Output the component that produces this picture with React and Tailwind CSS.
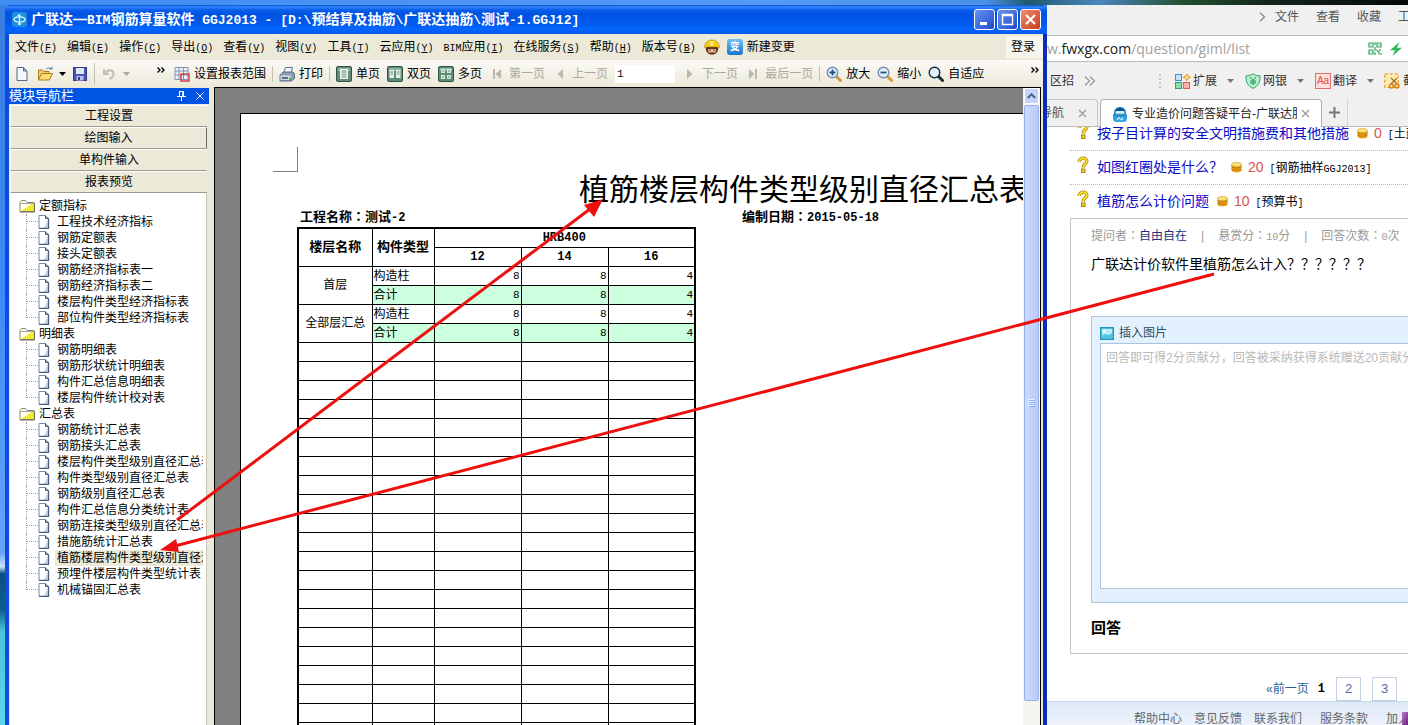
import React from "react";

const CJK = "font-['Liberation_Sans','Noto_Sans_CJK_SC',sans-serif]";

/* Sets the Latin runs of a mixed string in a monospaced face and centres full-width colons. */
function Mixed({ text, latin = "text-[10px]" }) {
  return text.split(/([\x20-\x7e]+|：)/).filter(Boolean).map((part, i) =>
    /^[\x20-\x7e]/.test(part) ? (
      <span key={i} className={`whitespace-pre font-['Liberation_Mono',monospace] ${latin}`}>{part}</span>
    ) : (
      <span key={i} className={part === "：" ? "font-['Noto_Sans_CJK_TC',sans-serif] leading-none" : ""} lang={part === "：" ? "zh-TW" : undefined}>{part}</span>
    )
  );
}

/* ---------- icons ---------- */

const Svg = ({ w = 16, h = 16, children, className = "" }) => (
  <svg width={w} height={h} viewBox={`0 0 ${w} ${h}`} className={`shrink-0 ${className}`} aria-hidden="true">
    {children}
  </svg>
);

const AppLogo = () => (
  <Svg w={15} h={15}>
    <rect width="15" height="15" rx="3" fill="#1c8fe0" />
    <ellipse cx="7.5" cy="7.5" rx="5.5" ry="2.6" fill="none" stroke="#d8f4ff" strokeWidth="1.3" />
    <path d="M7.5 2v11M5.5 3.5h3M6 12h3" stroke="#d8f4ff" strokeWidth="1.3" fill="none" />
  </Svg>
);

const NewFile = () => (
  <Svg>
    <path d="M3 1.5h6.5l3.500 3.500v9.500h-10z" fill="#f4f7fd" stroke="#56698f" />
    <path d="M9.500 1.500v3.500h3.500z" fill="#b4c4e4" stroke="#56698f" />
  </Svg>
);

const OpenFile = () => (
  <Svg>
    <path d="M1.500 14V4h4l1.500 1.500h5V8" fill="#f5cf68" stroke="#a97a1c" />
    <path d="M1.500 14l3-6.500h11l-3.200 6.500z" fill="#fbdc7b" stroke="#a97a1c" />
    <path d="M9 3.500c1.500-2 4-2 5 0" fill="none" stroke="#48729e" />
    <path d="M12.200 3.200h3.200v-2.700z" fill="#48729e" />
  </Svg>
);

const Save = () => (
  <Svg>
    <rect x="1.500" y="1.500" width="13" height="13" fill="#4a55b8" stroke="#30397f" />
    <rect x="4" y="2" width="8" height="6" fill="#dfe6f7" />
    <rect x="4.500" y="10" width="7" height="4.500" fill="#b9c3e6" />
    <rect x="6" y="11" width="2" height="3" fill="#30397f" />
  </Svg>
);

const Undo = () => (
  <Svg>
    <path d="M3 3v5h5" fill="none" stroke="#c4c3ba" strokeWidth="2" />
    <path d="M3.500 7.500C6 3.500 12 3 12.500 7.500c.3 3-2 4.500-4 5.500" fill="none" stroke="#c4c3ba" strokeWidth="2.200" />
  </Svg>
);

const Caret = ({ color = "#000" }) => (
  <Svg w={7} h={4}><path d="M0 0h7L3.500 4z" fill={color} /></Svg>
);

const RangeIcon = () => (
  <Svg>
    <path d="M1 1.500h13v12H1zM1 5h13M1 9h13M5 1v12.500M9.500 1v12.500" fill="#eef3fb" stroke="#7e93b4" />
    <rect x="7" y="8" width="8" height="7" fill="none" stroke="#d0434a" strokeWidth="1.500" />
  </Svg>
);

const Printer = () => (
  <Svg>
    <path d="M4.500 7l2-5.500h7L12 7z" fill="#eef4ff" stroke="#5b7396" />
    <path d="M1 9l3-3h10l1.500 2v4.500l-3 2.500H1z" fill="#8fa0b4" stroke="#445a74" strokeWidth=".8" />
    <path d="M1.500 9.500h10.500v4.500H1.500z" fill="#d2dce6" />
    <rect x="3" y="11" width="6" height="2" fill="#58708c" />
    <rect x="10" y="11.500" width="3" height="2.500" fill="#46c046" />
  </Svg>
);

const PageFrame = ({ children }) => (
  <Svg>
    <rect x=".5" y=".5" width="15" height="15" rx="1.500" fill="#5f8a78" stroke="#2f5546" />
    <path d="M2 2h12v3H2z" fill="#8db5a2" />
    {children}
  </Svg>
);

const OnePage = () => (
  <PageFrame>
    <rect x="4" y="3" width="8" height="10" fill="#eef6ee" />
    <path d="M5.500 5h5M5.500 7h5M5.500 9h5M5.500 11h5" stroke="#6c8c80" />
  </PageFrame>
);
const TwoPages = () => (
  <PageFrame>
    <path d="M2.500 4h4.500v8H2.500zM9 4h4.500v8H9z" fill="#e4f2e6" />
    <path d="M3.500 6h2.500M3.500 8h2.500M10 6h2.500M10 8h2.500" stroke="#6c8c80" />
  </PageFrame>
);
const ManyPages = () => (
  <PageFrame>
    <path d="M3 3h4v4H3zM9 3h4v4H9zM3 9h4v4H3zM9 9h4v4H9z" fill="#d4ecd6" />
    <path d="M5 4v2M11 4v2M5 10v2M11 10v2" stroke="#6c8c80" />
  </PageFrame>
);

const First = () => <Svg><path d="M4 3h2v10H4zM12 3v10L6.500 8z" fill="#b9b8ad" /></Svg>;
const Prev = () => <Svg><path d="M11 3v10L5.500 8z" fill="#b9b8ad" /></Svg>;
const Next = () => <Svg><path d="M5 3v10l5.500-5z" fill="#b9b8ad" /></Svg>;
const Last = () => <Svg><path d="M10 3h2v10h-2zM4 3v10l5.500-5z" fill="#b9b8ad" /></Svg>;

const Lens = ({ ring = "#6f8fb6", handle = "#d19a3c", children }) => (
  <Svg>
    <path d="M10 10l4.500 4.500" stroke={handle} strokeWidth="3" strokeLinecap="round" />
    <circle cx="6.500" cy="6.500" r="5.300" fill="#e3f0fb" stroke={ring} strokeWidth="1.400" />
    {children}
  </Svg>
);
const ZoomIn = () => <Lens><path d="M6.500 3.500v6M3.500 6.500h6" stroke="#2a4f86" strokeWidth="1.800" /></Lens>;
const ZoomOut = () => <Lens><path d="M3.500 6.500h6" stroke="#2a4f86" strokeWidth="1.800" /></Lens>;
const ZoomFit = () => <Lens ring="#1c2b3c" handle="#1c2b3c" />;

const Helmet = () => (
  <Svg>
    <circle cx="8" cy="9.500" r="6.200" fill="#5a2f1c" />
    <path d="M4 9.500h8v2.500c-1 3-7 3-8 0z" fill="#f2c49c" />
    <path d="M.5 8.500C.5-1.500 15.500-1.500 15.500 8.500l-3-.5h-9z" fill="#f3cb1d" stroke="#b88f08" strokeWidth=".7" />
    <path d="M6 2.500c1-.8 3-.8 4 0v4H6z" fill="#fbe669" />
    <path d="M3.500 8.500h9v1.500h-9z" fill="#5a2f1c" />
    <path d="M6 10.500v1.500M10 10.500v1.500" stroke="#3d1b10" strokeWidth="1.200" />
    <path d="M6.500 13.500h3" stroke="#c43c2c" />
  </Svg>
);

const ChangeIcon = () => (
  <span className="flex size-4 shrink-0 items-center justify-center rounded-[3px] bg-linear-to-b from-[#6cc0f5] to-[#1774cc] text-[10px] leading-4 font-bold text-white">变</span>
);

const FolderIcon = () => (
  <Svg w={16} h={14}>
    <path d="M1 12.500V3.500l1.500-2h4l1.500 2h7v9z" fill="#fffef0" stroke="#85857c" />
    <path d="M2 12L14.500 4v8z" fill="#f2ec30" />
    <path d="M1 4.500h13.500" stroke="#a8a89c" />
    <path d="M15.500 4v9H1" fill="none" stroke="#6b6b5c" />
  </Svg>
);

const DocIcon = () => (
  <Svg w={12} h={14}>
    <path d="M1 .5h6.500l3 3v10H1z" fill="#fff" stroke="#7a88a4" />
    <path d="M6 13L10 5v8z" fill="#ccd8ee" />
    <path d="M7.500 .5v3h3" fill="#92a4c4" stroke="#4c5c7c" />
    <path d="M10.500 3.500v10H1" fill="none" stroke="#4c5c7c" strokeWidth="1.300" />
  </Svg>
);

const QuestionMark = () => (
  <Svg w={12} h={18}>
    <path d="M2.200 6C2 1 10 1 9.800 5.500 9.700 8 6.200 8 6.200 11.500" fill="none" stroke="#a8860c" strokeWidth="3.400" />
    <path d="M2.200 6C2 1 10 1 9.800 5.500 9.700 8 6.200 8 6.200 11.500" fill="none" stroke="#fbdf2c" strokeWidth="1.900" />
    <rect x="4.500" y="13" width="3.500" height="3.500" fill="#f3cf20" stroke="#a8860c" />
  </Svg>
);

const Coins = () => (
  <Svg w={11} h={11}>
    <path d="M.5 2.500v6c0 2.600 10 2.600 10 0v-6z" fill="#eda51c" />
    <path d="M.5 4.500c0 2 10 2 10 0M.5 6.700c0 2 10 2 10 0" fill="none" stroke="#b26f05" strokeWidth=".9" />
    <ellipse cx="5.500" cy="2.600" rx="5" ry="2.100" fill="#fbe17a" stroke="#d19418" strokeWidth=".6" />
  </Svg>
);

const ExtIcon = () => (
  <Svg>
    <rect x=".5" y="1.500" width="6" height="6" fill="#c6e2fa" stroke="#3f8fd4" />
    <rect x=".5" y="9.500" width="6" height="6" fill="#8fe0aa" stroke="#2fa45c" />
    <rect x="8.500" y="9.500" width="6" height="6" fill="#fbb0ac" stroke="#e05a54" />
    <path d="M11.800 1l1.200 2.200L15.500 4.300 13 5.500l-1.200 2.300L10.600 5.500 8.200 4.300l2.400-1.100z" fill="#fbe08a" stroke="#e0982c" />
  </Svg>
);

const ShieldIcon = () => (
  <Svg>
    <path d="M8 .8c2 1.500 4.500 2 7 2 .3 6-1.500 10-7 12.600C2.500 12.800.7 8.800 1 2.800c2.500 0 5-.5 7-2z" fill="#b6f0cc" stroke="#2fa466" />
    <path d="M5 4l3 3.500L11 4M8 7.500V12M5 8h6M5 10h6" fill="none" stroke="#1f9458" />
  </Svg>
);

const TranslateIcon = () => (
  <span className="flex h-4 w-4 shrink-0 items-center justify-center border border-[#e07068] bg-[#fde0dc] text-[10px] leading-4 text-[#dc4c44]">Aa</span>
);

const ShotIcon = () => (
  <Svg>
    <rect x=".8" y=".8" width="13.500" height="13.500" fill="#fdebb4" stroke="#e8a430" strokeWidth="1.300" strokeDasharray="3 2" />
    <path d="M7 5l6 6M13 5l-6 6" stroke="#a06a18" strokeWidth="1.200" />
    <circle cx="7.500" cy="13" r="2" fill="none" stroke="#e07c10" strokeWidth="1.400" />
    <circle cx="13" cy="13" r="2" fill="none" stroke="#e07c10" strokeWidth="1.400" />
  </Svg>
);

const QrIcon = () => (
  <Svg w={14} h={13}>
    <path d="M1 1h4v4H1zM9 1h4v4H9zM1 8h4v4H1z" fill="none" stroke="#2fa85c" strokeWidth="1.200" />
    <path d="M2.500 2.500h1v1h-1zM10.500 2.500h1v1h-1zM2.500 9.500h1v1h-1z" fill="#2fa85c" />
    <path d="M7 0v3M7 5v3h3M12 7v2M7 10v3M9 9.500h2v3M13 11v2" fill="none" stroke="#2fa85c" strokeWidth="1.200" />
  </Svg>
);

const Bolt = () => (
  <Svg w={12} h={14}><path d="M9.500 0L0 8.200h5L2.500 14 12 5.800H7z" fill="#2fb85c" /></Svg>
);

const SiteIcon = () => (
  <Svg>
    <path d="M2 8C1-1.500 15-1.500 14 8z" fill="#1c7cba" />
    <path d="M3.500 5.500C4.500.8 11.500.8 12.500 5.500z" fill="#0f4f88" />
    <rect x="3.500" y="5" width="9" height="2.800" rx="1.400" fill="#d4f0fb" />
    <path d="M1 8.500h14v4c0 2.500-1.500 3.500-3.500 3.500h-7C2.500 16 1 15 1 12.500z" fill="#2fa4e0" />
    <path d="M1.500 9h13" stroke="#0f5f98" />
    <path d="M5 13.500l3-2M8.500 14l2.500-2" stroke="#fff" strokeWidth="1.200" />
  </Svg>
);

const PictureIcon = () => (
  <Svg w={14} h={13}>
    <rect x=".8" y=".8" width="12.400" height="11.400" fill="#b8ecf8" stroke="#1b96bc" strokeWidth="1.600" />
    <path d="M2 11V8.500l3-1.500 3 1 4-1.500V11z" fill="#4cc4e4" />
    <circle cx="4.500" cy="4.500" r="1.300" fill="#fff" />
  </Svg>
);

/* ---------- report application ---------- */

const menus = [
  ["文件", "F"], ["编辑", "E"], ["操作", "C"], ["导出", "O"], ["查看", "V"], ["视图", "V"],
  ["工具", "T"], ["云应用", "Y"], ["BIM应用", "I"], ["在线服务", "S"], ["帮助", "H"], ["版本号", "B"],
];

function TitleBar() {
  const box = "flex size-[21px] items-center justify-center rounded-[3px] border border-white";
  return (
    <header className="flex h-[29px] shrink-0 items-center gap-[4px] rounded-t-md bg-[linear-gradient(to_bottom,#0b50cf_0,#3286fb_2px,#0a5eea_5px,#0053e1_9px,#0058ea_18px,#0366ff_24px,#0458ea_29px)] pr-[6px] pl-[7px]">
      <AppLogo />
      <h1 className="min-w-0 flex-1 truncate text-[14px] leading-5 font-bold whitespace-nowrap text-white">
        <Mixed text="广联达—BIM钢筋算量软件 GGJ2013 - [D:\预结算及抽筋\广联达抽筋\测试-1.GGJ12]" latin="text-[13px]" />
      </h1>
      <div className="flex gap-[2px]">
        <button aria-label="最小化" className={`${box} bg-linear-to-br from-[#6a93f0] to-[#1c49cc]`}>
          <Svg w={13} h={13}><path d="M2 9h7v3H2z" fill="#fff" /></Svg>
        </button>
        <button aria-label="最大化" className={`${box} bg-linear-to-br from-[#6a93f0] to-[#1c49cc]`}>
          <Svg w={13} h={13}><path d="M1.500 1.500h10v10h-10zM1 2.500h11" fill="none" stroke="#fff" strokeWidth="1.400" /></Svg>
        </button>
        <button aria-label="关闭" className={`${box} bg-linear-to-br from-[#ee8e70] to-[#c8381a]`}>
          <Svg w={13} h={13}><path d="M2 2l9 9M11 2l-9 9" stroke="#fff" strokeWidth="2.200" /></Svg>
        </button>
      </div>
    </header>
  );
}

function MenuBar() {
  return (
    <nav className="flex h-[26px] shrink-0 items-center bg-[#ece9d8] pl-[6px] text-black">
      <div className="flex gap-[10px]">
        {menus.map(([name, key]) => (
          <button key={name} className="whitespace-nowrap">
            <Mixed text={name} />
            <span className="font-['Liberation_Mono',monospace] text-[10px]">(<u>{key}</u>)</span>
          </button>
        ))}
      </div>
      <button aria-label="帮手" className="ml-[8px]"><Helmet /></button>
      <button className="ml-[7px] flex items-center gap-1 whitespace-nowrap"><ChangeIcon />新建变更</button>
      <button className="ml-auto h-[22px] bg-[#f7f6ee] pr-[8px] pl-[5px]">登录</button>
    </nav>
  );
}

const Tool = ({ icon, children, off }) => (
  <button disabled={off} className={`flex shrink-0 items-center gap-1 whitespace-nowrap ${off ? "text-[#aaa99c]" : ""}`}>
    {icon}{children}
  </button>
);
const Sep = () => <span className="-mx-px h-4 w-px shrink-0 bg-[#c5c2b2]" />;
const More = () => (
  <Svg w={8} h={6}><path d="M.5 .5L3 3 .5 5.500M4.500 .5L7 3 4.500 5.500" fill="none" stroke="#000" strokeWidth="1.400" /></Svg>
);

function ToolBar() {
  return (
    <div className="flex h-[27px] shrink-0 items-center bg-linear-to-b from-[#fbfaf7] to-[#ece9d8]">
      <div className="flex w-[160px] shrink-0 items-center pl-[5px]">
        <button aria-label="新建"><NewFile /></button>
        <button aria-label="打开" className="ml-[7px] flex items-center gap-[6px]"><OpenFile /><Caret /></button>
        <button aria-label="保存" className="ml-[6px]"><Save /></button>
        <span className="mx-[6px] h-[22px] w-px bg-[#c5c2b2]" />
        <button aria-label="撤销" className="flex items-center gap-[6px]"><Undo /><Caret color="#aaa99c" /></button>
        <button aria-label="更多" className="mr-[4px] ml-auto pb-2"><More /></button>
      </div>
      <div className="flex min-w-0 flex-1 items-center gap-[7px] overflow-hidden pl-[5px]">
        <Tool icon={<RangeIcon />}>设置报表范围</Tool>
        <Sep />
        <Tool icon={<Printer />}>打印</Tool>
        <Sep />
        <Tool icon={<OnePage />}>单页</Tool>
        <Tool icon={<TwoPages />}>双页</Tool>
        <Tool icon={<ManyPages />}>多页</Tool>
        <Tool icon={<First />} off>第一页</Tool>
        <Tool icon={<Prev />} off>上一页</Tool>
        <input aria-label="页码" defaultValue="1" className="h-[18px] w-[60px] shrink-0 bg-white px-[2px] font-['Liberation_Mono',monospace] text-[11px] outline-none" />
        <Tool icon={<Next />} off>下一页</Tool>
        <Tool icon={<Last />} off>最后一页</Tool>
        <Sep />
        <Tool icon={<ZoomIn />}>放大</Tool>
        <Tool icon={<ZoomOut />}>缩小</Tool>
        <Tool icon={<ZoomFit />}>自适应</Tool>
      </div>
      <button aria-label="更多工具" className="pr-[4px] pb-2"><More /></button>
    </div>
  );
}

const tree = [
  ["定额指标", ["工程技术经济指标", "钢筋定额表", "接头定额表", "钢筋经济指标表一", "钢筋经济指标表二", "楼层构件类型经济指标表", "部位构件类型经济指标表"]],
  ["明细表", ["钢筋明细表", "钢筋形状统计明细表", "构件汇总信息明细表", "楼层构件统计校对表"]],
  ["汇总表", ["钢筋统计汇总表", "钢筋接头汇总表", "楼层构件类型级别直径汇总表", "构件类型级别直径汇总表", "钢筋级别直径汇总表", "构件汇总信息分类统计表", "钢筋连接类型级别直径汇总表", "措施筋统计汇总表", "植筋楼层构件类型级别直径汇总表", "预埋件楼层构件类型统计表", "机械锚固汇总表"]],
];
const selected = "植筋楼层构件类型级别直径汇总表";

function TreeItem({ name, last }) {
  return (
    <li className="flex h-4 items-center">
      <span className={`ml-[16px] w-[12px] shrink-0 self-stretch ${last ? "" : "border-l border-dotted border-[#a5a5a0]"}`}>
        <span className={`block h-2 border-b border-dotted border-[#a5a5a0] ${last ? "border-l" : ""}`} />
      </span>
      <DocIcon />
      <button className={`ml-[5px] min-w-0 flex-1 overflow-hidden pl-[2px] text-left leading-4 whitespace-nowrap ${name === selected ? "bg-[#ece9d8]" : ""}`}>
        {name}
      </button>
    </li>
  );
}

function SidePanel() {
  return (
    <aside className="flex w-[200px] shrink-0 flex-col overflow-hidden pt-px">
      <div className="flex h-[16px] shrink-0 items-center bg-[#0054e3] pr-[5px] text-white">
        <span className="text-[13px] leading-4">模块导航栏</span>
        <button aria-label="固定" className="ml-auto">
          <Svg w={9} h={10}><path d="M2.500 0v5.500M6.500 0v5.500M2 .5h5M0 5.500h9M4.500 6v4M5.700 0v5" fill="none" stroke="#fff" /></Svg>
        </button>
        <button aria-label="关闭面板" className="ml-[10px]">
          <Svg w={8} h={8}><path d="M.5 .5l7 7M7.500 .5l-7 7" stroke="#fff" /></Svg>
        </button>
      </div>
      <div className="flex min-h-0 flex-1 flex-col pt-px pr-[2px] pl-px">
        {["工程设置", "绘图输入", "单构件输入", "报表预览"].map((name, i) => (
          <button key={name} className={`h-[22px] shrink-0 border-t border-b border-l border-t-white border-b-[#9c9a8c] border-l-white bg-[#ece9d8] leading-5 ${i === 1 ? "border-r border-r-[#716f64]" : ""}`}>
            {name}
          </button>
        ))}
        <div className="min-h-0 flex-1 overflow-hidden border-r border-[#c9c6b6] bg-white pt-[5px] pr-[3px]">
          <ul>
            {tree.map(([group, items]) => (
              <li key={group}>
                <button className="flex h-4 items-center gap-[4px] pl-[9px] leading-4"><FolderIcon />{group}</button>
                <ul>
                  {items.map((name, i) => <TreeItem key={name} name={name} last={i === items.length - 1} />)}
                </ul>
              </li>
            ))}
          </ul>
        </div>
      </div>
    </aside>
  );
}

const cell = "h-[19px] border border-black p-0 leading-[14px]";
const num = "pr-px text-right font-['Liberation_Mono',monospace] text-[11px]";

function ReportTable() {
  return (
    <table className="w-[398px] table-fixed border-collapse border-2 border-black">
      <colgroup>
        <col className="w-[74px]" /><col className="w-[62px]" /><col className="w-[87px]" /><col className="w-[87px]" /><col className="w-[87px]" />
      </colgroup>
      <thead className="text-[13px]">
        <tr>
          <th rowSpan={2} className={cell}>楼层名称</th>
          <th rowSpan={2} className={cell}>构件类型</th>
          <th colSpan={3} className={`${cell} font-['Liberation_Mono',monospace] text-[12px]`}>HRB400</th>
        </tr>
        <tr>
          {[12, 14, 16].map((d) => <th key={d} className={`${cell} font-['Liberation_Mono',monospace] text-[12px]`}>{d}</th>)}
        </tr>
      </thead>
      <tbody>
        {["首层", "全部层汇总"].map((floor) => (
          <React.Fragment key={floor}>
            <tr>
              <td rowSpan={2} className={`${cell} text-center`}>{floor}</td>
              <td className={`${cell} pl-px`}>构造柱</td>
              {[8, 8, 4].map((n, i) => <td key={i} className={`${cell} ${num}`}>{n}</td>)}
            </tr>
            <tr className="bg-[#ccffdd]">
              <td className={`${cell} pl-px`}>合计</td>
              {[8, 8, 4].map((n, i) => <td key={i} className={`${cell} ${num}`}>{n}</td>)}
            </tr>
          </React.Fragment>
        ))}
        {Array.from({ length: 30 }, (_, r) => (
          <tr key={r}>{[0, 1, 2, 3, 4].map((c) => <td key={c} className={cell} />)}</tr>
        ))}
      </tbody>
    </table>
  );
}

function Preview() {
  return (
    <main className="mr-[2px] ml-[5px] flex min-w-0 flex-1 border-t border-r border-l border-black">
      <div className="flex min-w-0 flex-1 overflow-hidden bg-[#808080] pt-[25px] pl-[25px]">
        <article className="w-[1127px] shrink-0 border-t border-l border-black bg-white">
          <div className="mt-[33px] ml-[32px] size-[25px] border-r border-b border-[#808080]" />
          <div className="px-[56px]">
            <h2 className="text-center text-[30px] leading-[36px] whitespace-nowrap">植筋楼层构件类型级别直径汇总表</h2>
            <div className="flex h-[19px] text-[13px] leading-[17px] font-bold">
              <span className="w-[445px] pl-[3px]"><Mixed text="工程名称：测试-2" latin="text-[12px]" /></span>
              <span><Mixed text="编制日期：2015-05-18" latin="text-[12px]" /></span>
            </div>
            <ReportTable />
          </div>
        </article>
      </div>
      <div className="flex w-[17px] shrink-0 flex-col bg-[#f6f5f0] px-px">
        <button aria-label="向上滚动" className="flex h-[16px] items-center justify-center rounded-[2px] border border-white bg-[#c3d3fd]">
          <Svg w={9} h={6}><path d="M.8 5L4.500 1.300 8.200 5" fill="none" stroke="#4d6185" strokeWidth="2" /></Svg>
        </button>
        <div className="mt-px mb-[24px] flex flex-1 items-center justify-center rounded-[2px] border border-[#98b0e8] bg-linear-to-r from-[#cbdafe] to-[#b9cbfa]">
          <Svg w={7} h={8}><path d="M0 .5h6M0 2.500h6M0 4.500h6M0 6.500h6" stroke="#eef4fe" /><path d="M1 1.500h6M1 3.500h6M1 5.500h6M1 7.500h6" stroke="#8cb0f8" /></Svg>
        </div>
      </div>
    </main>
  );
}

/* ---------- browser ---------- */

const Coin = ({ n, tag }) => (
  <>
    <Coins />
    <span className="mx-[6px] text-[14px] text-[#d9534f]">{n}</span>
    <span className="whitespace-nowrap text-black"><Mixed text={tag} /></span>
  </>
);

function Question({ title, n, tag, className = "h-[34px] border-b" }) {
  return (
    <li className={`flex shrink-0 items-center border-dotted border-[#b8b8b8] pl-[7px] ${className}`}>
      <span className="mr-[8px] pb-[6px]"><QuestionMark /></span>
      <a href="#question" className="mr-[8px] text-[14px] whitespace-nowrap text-[#0a0ac8]">{title}</a>
      <Coin n={n} tag={tag} />
    </li>
  );
}

function BrowserChrome() {
  return (
    <div className="shrink-0 bg-[#f0f0f0] text-[#333]">
      <div className="flex h-[30px] items-center gap-[17px] overflow-hidden pb-[6px] pl-[212px] whitespace-nowrap text-[#555]">
        <span className="-mr-[8px]"><Svg w={7} h={10}><path d="M1 .8L5.500 5 1 9.200" fill="none" stroke="#888" strokeWidth="1.300" /></Svg></span>
        <button className="shrink-0">文件</button>
        <button className="shrink-0">查看</button>
        <button className="shrink-0">收藏</button>
        <button className="shrink-0">工具</button>
      </div>
      <div className="flex h-[27px] items-center gap-[8px] border-y border-[#b9b9b9] bg-white pr-[6px]">
        <span className="min-w-0 flex-1 overflow-hidden font-['Open_Sans','Noto_Sans',sans-serif] text-[14px] whitespace-nowrap text-[#a0a0a0]">
          w.<span className="text-[#222]">fwxgx.com</span>/question/giml/list
        </span>
        <QrIcon />
        <Bolt />
      </div>
      <div className="flex h-[37px] items-center overflow-hidden whitespace-nowrap">
        <span className="flex w-[68px] shrink-0 items-center gap-[10px] pl-[3px]">
          区招
          <Svg w={12} h={10}><path d="M1 .5L5.500 5 1 9.500M6 .5L10.500 5 6 9.500" fill="none" stroke="#999" strokeWidth="1.300" /></Svg>
        </span>
        <span className="ml-[44px] flex shrink-0 flex-col gap-[2px]">
          <i className="size-[2px] bg-[#c4c4c4]" /><i className="size-[2px] bg-[#c4c4c4]" /><i className="size-[2px] bg-[#c4c4c4]" /><i className="size-[2px] bg-[#c4c4c4]" />
        </span>
        <button className="ml-[14px] flex shrink-0 items-center gap-[2px]"><ExtIcon />扩展<span className="ml-[8px]"><Caret color="#777" /></span></button>
        <button className="ml-[11px] flex shrink-0 items-center gap-[2px]"><ShieldIcon />网银<span className="ml-[8px]"><Caret color="#777" /></span></button>
        <button className="ml-[11px] flex shrink-0 items-center gap-[2px]"><TranslateIcon />翻译<span className="ml-[8px]"><Caret color="#777" /></span></button>
        <button className="ml-[10px] flex shrink-0 items-center gap-[3px]"><ShotIcon />截图</button>
      </div>
      <div className="flex h-[28px] border-b border-[#b9b9b9]">
        <div className="flex w-[51px] shrink-0 items-center rounded-tr border-t border-r border-[#c8c8c8] text-[#555]">
          <span className="-ml-[7px]">导航</span>
          <button aria-label="关闭标签" className="mr-[10px] ml-auto"><Svg w={9} h={9}><path d="M1 1l7 7M8 1L1 8" stroke="#999" strokeWidth="1.300" /></Svg></button>
        </div>
        <div className="-mb-px ml-[2px] flex w-[222px] shrink-0 items-center rounded-t border border-b-0 border-[#b0b0b0] bg-white pl-[11px]">
          <SiteIcon />
          <span className="ml-[4px] w-[165px] overflow-hidden text-[12px] whitespace-nowrap text-[#222]">专业造价问题答疑平台-广联达服务</span>
          <button aria-label="关闭当前标签" className="ml-[4px]"><Svg w={9} h={9}><path d="M1 1l7 7M8 1L1 8" stroke="#999" strokeWidth="1.300" /></Svg></button>
        </div>
        <button aria-label="新标签" className="flex w-[26px] shrink-0 items-center justify-center border-r border-[#d4d4d4]"><Svg w={11} h={11}><path d="M5.500 0v11M0 5.500h11" stroke="#777" strokeWidth="2" /></Svg></button>
      </div>
    </div>
  );
}

function BrowserPage() {
  return (
    <div className="relative flex min-h-0 flex-1 flex-col overflow-hidden bg-white">
      <section className="flex flex-1 flex-col pl-[23px]">
        <ul className="flex flex-col overflow-hidden">
          <Question className="-mt-[10px] h-[34px] border-b" title="按子目计算的安全文明措施费和其他措施" n={0} tag="[土建]" />
          <Question title="如图红圈处是什么？" n={20} tag="[钢筋抽样GGJ2013]" />
          <Question className="h-[33px]" title="植筋怎么计价问题" n={10} tag="[预算书]" />
        </ul>
        <div className="flex h-[436px] flex-col border-y border-l border-[#c4c4c4] pl-[20px]">
          <p className="mt-[9px] flex gap-[14px] leading-4 whitespace-nowrap text-[#999]">
            <span><Mixed text="提问者：" /><a href="#user" className="text-[#1c2f7c]">自由自在</a></span>
            <span>|</span><span><Mixed text="悬赏分：10分" /></span>
            <span>|</span><span><Mixed text="回答次数：0次" /></span>
          </p>
          <p className="mt-[8px] text-[14px] leading-5 whitespace-nowrap text-black">广联达计价软件里植筋怎么计入？？？？？？</p>
          <div className="mt-[42px] flex h-[287px] flex-col border border-r-0 border-[#a9c3e0] bg-[#e3f0fd] pt-[6px] pb-[13px] pl-[8px]">
            <button className="flex h-[20px] items-center gap-[5px] text-[#2f4f5f]"><PictureIcon />插入图片</button>
            <textarea
              aria-label="回答内容"
              placeholder="回答即可得2分贡献分，回答被采纳获得系统赠送20贡献分"
              wrap="off"
              className="min-h-0 w-full flex-1 resize-none overflow-hidden border border-r-0 border-[#a9c3e0] bg-white px-[5px] py-[6px] leading-4 outline-none placeholder:text-[#b9b9b9]"
            />
          </div>
          <h3 className="mt-[15px] text-[15px] leading-5 font-bold text-black">回答</h3>
        </div>
        <nav aria-label="分页" className="mt-[23px] flex h-[24px] items-center justify-end pr-[11px] text-[#2a6496]">
          <a href="#prev">«前一页</a>
          <b className="mr-[11px] ml-[9px] font-['Liberation_Mono',monospace] text-black">1</b>
          <a href="#2" className="mr-[11px] flex h-[24px] w-[25px] items-center justify-center border border-[#c3d0e6] text-[13px] text-[#4a6da8]">2</a>
          <a href="#3" className="flex h-[24px] w-[25px] items-center justify-center border border-[#c3d0e6] text-[13px] text-[#4a6da8]">3</a>
        </nav>
      </section>
      <footer className="flex h-[24px] shrink-0 items-end gap-[12px] overflow-hidden border-t border-[#c6d4ea] bg-linear-to-b from-[#dde8f8] to-[#eef3fc] pl-[87px] whitespace-nowrap text-[#666]">
        <a href="#help" className="shrink-0 leading-[12px]">帮助中心</a>
        <a href="#feedback" className="shrink-0 leading-[12px]">意见反馈</a>
        <a href="#contact" className="shrink-0 leading-[12px]">联系我们</a>
        <a href="#terms" className="ml-[6px] shrink-0 leading-[12px]">服务条款</a>
        <a href="#join" className="ml-[6px] shrink-0 leading-[12px]">加入</a>
      </footer>
      <span className="absolute right-0 bottom-0 h-[13px] w-[6px] bg-linear-to-br from-[#c07ac8] to-[#6a1c86]" />
    </div>
  );
}

const Arrows = () => (
  <svg className="pointer-events-none absolute top-0 left-0" width="1408" height="725" viewBox="0 0 1408 725" aria-hidden="true">
    <g stroke="#ee0f0f" strokeWidth="3" fill="none">
      <path d="M177 520L590 209" />
      <path d="M1214 274L175 546" />
    </g>
    <path d="M603 199L584 205L594 217z" fill="#ee0f0f" />
    <path d="M160 550L176 539L179 552z" fill="#ee0f0f" />
  </svg>
);

export default function App() {
  return (
    <div className={`relative flex h-screen flex-col overflow-hidden bg-[#3f86ee] text-[12px] text-black ${CJK}`}>
      <div className="h-[5px] shrink-0 bg-[linear-gradient(to_right,#3f8cf2_0,#5599f6_55%,#4a90e8_70%,#1d5a6c_73%,#4a86c0_78%,#23512f_84%,#14261c_90%,#050808_100%)]" />
      <div className="flex min-h-0 flex-1">
        <div className="w-[5px] shrink-0 bg-[linear-gradient(to_bottom,#3a7de0_0,#3d8bf8_40%,#66a4f8_76%,#c8e4f8_78%,#0d4f80_79%,#0c5f8c_84%,#4ac4d8_87%,#5cd8e8_100%)]" />
        <div className="flex min-w-0 flex-1 flex-col rounded-t-md bg-[#0a3cd0]">
          <TitleBar />
          <div className="flex min-h-0 flex-1 flex-col border-x-4 border-r-[#0a2cb8] border-l-[#0f4be0] bg-[#ece9d8]">
            <MenuBar />
            <ToolBar />
            <div className="flex min-h-0 flex-1">
              <SidePanel />
              <Preview />
            </div>
          </div>
        </div>
        <div className="flex w-[361px] shrink-0 flex-col overflow-hidden">
          <BrowserChrome />
          <BrowserPage />
        </div>
      </div>
      <Arrows />
    </div>
  );
}
